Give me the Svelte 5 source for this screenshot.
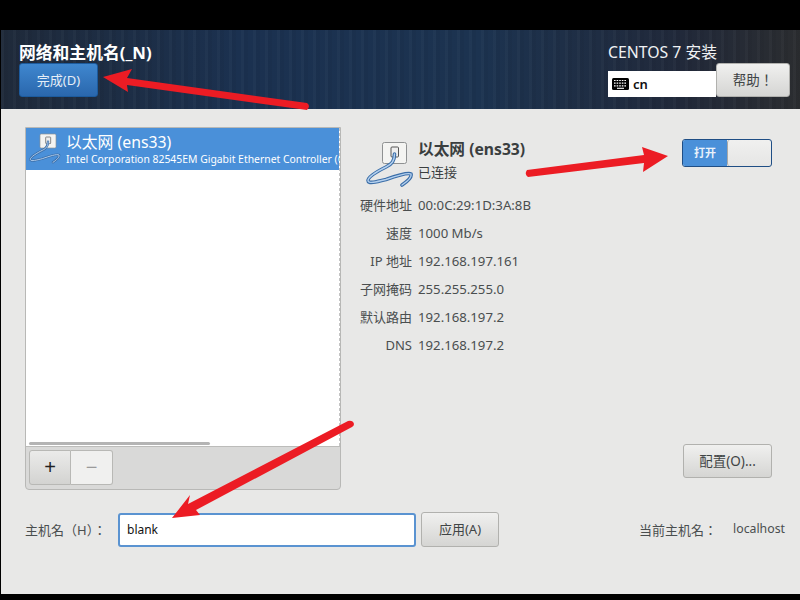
<script>
  const details = [
    ['硬件地址', '00:0C:29:1D:3A:8B'],
    ['速度', '1000 Mb/s'],
    ['IP 地址', '192.168.197.161'],
    ['子网掩码', '255.255.255.0'],
    ['默认路由', '192.168.197.2'],
    ['DNS', '192.168.197.2'],
  ];
  const cable = 'M28.5 13 C28.5 20 26 23 20 26 C12 30 2 36 2 39.5 C2 43 10 41 20 38.5 C30 35 42 31 45 33 C46 36 42 40 36 44';
</script>

{#snippet nicIcon(size)}
  <svg class="nic" width={size} height={size} viewBox="0 0 48 48" fill="none">
    <rect x="16.5" y="1.5" width="24" height="21" rx="2" fill="#f4f4f2" stroke="#8f9192" />
    <rect x="25" y="6" width="7.5" height="10" rx="1" fill="#eee" stroke="#555" />
    <path d={cable} stroke="#3b6ea8" stroke-width="3.6" stroke-linecap="round" />
    <path d={cable} stroke="#b4d0ee" stroke-width="1.4" stroke-linecap="round" />
  </svg>
{/snippet}

<div class="screen">
  <header class="topbar">
    <div class="spoke">
      <h1>网络和主机名(_N)</h1>
      <button class="btn done">完成(D)</button>
    </div>
    <div class="install">
      <div class="product">CENTOS 7 安装</div>
      <div class="install-row">
        <div class="layout">
          <svg width="17" height="12" viewBox="0 0 17 12">
            <rect width="17" height="12" rx="1.5" fill="#000" />
            <path d="M2 2.5h13M2 5.2h13M2 7.9h13" stroke="#fff" stroke-width="1.2" stroke-dasharray="1.6 1" />
            <path d="M5 10.3h7" stroke="#fff" stroke-width="1.1" />
          </svg>
          <span>cn</span>
        </div>
        <button class="btn help">帮助！</button>
      </div>
    </div>
  </header>

  <main class="content">
    <div class="columns">
      <section class="devices">
        <div class="list">
          <div class="device">
            {@render nicIcon(32)}
            <div class="device-text">
              <div class="device-name">以太网 (ens33)</div>
              <div class="device-desc">Intel Corporation 82545EM Gigabit Ethernet Controller (Copper)</div>
            </div>
          </div>
          <div class="scrollbar"></div>
        </div>
        <div class="toolbar">
          <div class="pair">
            <button class="tool add">+</button>
            <button class="tool remove">−</button>
          </div>
        </div>
      </section>

      <section class="detail">
        <div class="detail-head">
          <div class="detail-title">
            {@render nicIcon(48)}
            <div>
              <div class="detail-name">以太网 (ens33)</div>
              <div class="detail-state">已连接</div>
            </div>
          </div>
          <div class="switch">
            <span class="switch-on">打开</span>
            <span class="switch-knob"></span>
          </div>
        </div>
        <dl class="props">
          {#each details as [label, value]}
            <dt>{label}</dt>
            <dd>{value}</dd>
          {/each}
        </dl>
        <div class="config-row">
          <button class="btn config">配置(O)...</button>
        </div>
      </section>
    </div>

    <div class="hostname">
      <label for="host">主机名（H）：</label>
      <input id="host" value="blank" />
      <button class="btn apply">应用(A)</button>
      <div class="current">
        <span>当前主机名：</span>
        <span class="current-name">localhost</span>
      </div>
    </div>
  </main>

  <!-- red annotation arrows drawn over the screenshot -->
  <svg class="arrows" width="800" height="600" viewBox="0 0 800 600">
    <g fill="#ec1c24">
      <path d="M103 77 L132 69 L127 78 L307 103 Q311 106 307 110 L127 85 L128 92 Z" />
      <path d="M668 156 L642 147 L644 155 L527 170 Q524 174 528 177 L644 163 L643 172 Z" />
      <path d="M172 518 L190 495 L188 504 L348 421 Q353 420 354 424 Q354 426 352 427 L196 510 L200 515 Z" />
    </g>
  </svg>
</div>

<style>
  :global(body) {
    background: #000;
  }

  .screen {
    position: relative;
    width: 800px;
    height: 600px;
    box-sizing: border-box;
    padding: 30px 0 6px 1px;
    display: flex;
    flex-direction: column;
    background: #000;
    overflow: hidden;
    font-family: "Noto Sans", "Noto Sans CJK SC", sans-serif;
    font-size: 13px;
    color: #2e3436;
  }

  .topbar {
    height: 79px;
    flex: none;
    box-sizing: border-box;
    display: flex;
    justify-content: space-between;
    padding: 12px 10px 0 18px;
    background:
      repeating-linear-gradient(90deg, rgba(255, 255, 255, 0.025) 0 3px, rgba(0, 0, 0, 0.04) 3px 7px, rgba(255, 255, 255, 0) 7px 12px),
      linear-gradient(90deg, #1f2a3a 0%, #1b3150 30%, #1c3350 60%, #21293a 85%, #2b2d30 100%);
  }

  .spoke h1 {
    margin: 0;
    height: 21px;
    line-height: 21px;
    font-size: 16.8px;
    font-weight: 700;
    color: #fff;
    white-space: nowrap;
  }

  .btn {
    box-sizing: border-box;
    padding: 0 0 2px;
    font: inherit;
    font-size: 13px;
    color: #3f4445;
    border: 1px solid #b1b1ae;
    border-radius: 3px;
    background: linear-gradient(#f0f0ef, #d5d5d3);
  }

  .done {
    display: block;
    width: 79px;
    height: 34px;
    color: #e6eef7;
    border-color: #1c5b9e;
    background: linear-gradient(#3f87cf, #2a67ad);
  }

  .install {
    width: 182px;
  }

  .product {
    height: 21px;
    line-height: 21px;
    font-size: 15.8px;
    color: #f0f2f4;
    white-space: nowrap;
  }

  .install-row {
    display: flex;
    align-items: flex-end;
    height: 34px;
  }

  .layout {
    width: 108px;
    height: 26px;
    box-sizing: border-box;
    padding-left: 4px;
    display: flex;
    align-items: center;
    gap: 4px;
    background: #fff;
    color: #111;
    font-size: 13px;
    font-weight: 600;
  }

  .help {
    width: 74px;
    height: 34px;
    font-family: "Noto Sans", "Noto Sans CJK JP", sans-serif;
    font-size: 13.5px;
  }

  .content {
    flex: 1;
    display: flex;
    flex-direction: column;
    background: #e8e8e7;
    padding: 18px 0 0 24px;
  }

  .columns {
    display: flex;
    height: 363px;
  }

  .devices {
    width: 316px;
    flex: none;
    box-sizing: border-box;
    display: flex;
    flex-direction: column;
    border: 1px solid #b8b8b6;
    border-radius: 0 0 4px 4px;
    background: #d9d9d8;
  }

  .list {
    position: relative;
    flex: 1;
    background: #fff;
    border-right: 1px dashed #c4c4c4;
    overflow: hidden;
  }

  .device {
    height: 42px;
    display: flex;
    align-items: center;
    gap: 5px;
    padding-left: 3px;
    background: #4a90d9;
    color: #fff;
  }

  .nic {
    flex: none;
  }

  .device-text {
    white-space: nowrap;
  }

  .device-name {
    line-height: 20px;
    font-size: 15.8px;
  }

  .device-desc {
    line-height: 14px;
    font-size: 10.4px;
  }

  .scrollbar {
    position: absolute;
    left: 3px;
    bottom: 1px;
    width: 181px;
    height: 3px;
    border-radius: 2px;
    background: #b4b4b4;
  }

  .toolbar {
    height: 43px;
    flex: none;
    box-sizing: border-box;
    padding: 3px 0 0 3px;
    border-top: 1px solid #bcbcba;
  }

  .pair {
    display: flex;
    width: 84px;
    height: 35px;
  }

  .tool {
    box-sizing: border-box;
    height: 35px;
    padding: 0;
    font-family: "Liberation Sans", sans-serif;
    font-size: 20px;
    border: 1px solid #b8b8b5;
  }

  .add {
    width: 42px;
    color: #222;
    border-radius: 3px 0 0 3px;
    background: linear-gradient(#ebebea, #d3d3d1);
  }

  .remove {
    width: 42px;
    border-left: none;
    color: #9a9a9a;
    border-radius: 0 3px 3px 0;
    background: #f0f0ef;
  }

  .detail {
    flex: 1;
    display: flex;
    flex-direction: column;
    padding-left: 19px;
  }

  .detail-head {
    display: flex;
    justify-content: space-between;
    padding: 11px 28px 0 6px;
    height: 64px;
    box-sizing: border-box;
  }

  .detail-title {
    display: flex;
    gap: 4px;
  }

  .detail-title .nic {
    margin-top: 3px;
  }

  .detail-name {
    line-height: 22px;
    font-size: 15.7px;
    font-weight: 700;
    color: #3a3e3f;
  }

  .detail-state {
    line-height: 24px;
    font-size: 13px;
    color: #3a3e3f;
  }

  .switch {
    width: 90px;
    height: 28px;
    margin-top: 1px;
    box-sizing: border-box;
    display: flex;
    border: 1px solid #1f4e85;
    border-radius: 3px;
    overflow: hidden;
    background: linear-gradient(#f0f0ef, #e6e6e5);
  }

  .switch-on {
    width: 44px;
    line-height: 26px;
    text-align: center;
    font-size: 11px;
    font-weight: 700;
    color: #eaf2fb;
    background: #4a90d9;
  }

  .switch-knob {
    flex: 1;
    border-left: 1px solid #a8a8a6;
    border-radius: 3px 0 0 3px;
  }

  .props {
    margin: 0;
    display: grid;
    grid-template-columns: 52px 1fr;
    grid-auto-rows: 28px;
    column-gap: 6px;
    align-items: center;
    line-height: 28px;
  }

  .props dt {
    justify-self: end;
    white-space: nowrap;
    color: #4a4e4f;
  }

  .props dd {
    margin: 0;
    font-size: 13.2px;
    color: #4a4e4f;
  }

  .config-row {
    margin-top: auto;
    display: flex;
    justify-content: flex-end;
    padding: 0 28px 12px 0;
  }

  .config {
    width: 89px;
    height: 34px;
    font-size: 13.5px;
  }

  .hostname {
    display: flex;
    align-items: center;
    height: 35px;
    margin-top: 22px;
    padding-right: 15px;
    color: #4a4e4f;
    font-family: "Noto Sans", "Noto Sans CJK JP", sans-serif;
  }

  .hostname label {
    width: 93px;
    flex: none;
    white-space: nowrap;
  }

  #host {
    width: 298px;
    height: 34px;
    box-sizing: border-box;
    padding: 0 7px;
    font: inherit;
    font-size: 12px;
    color: #111;
    border: 2px solid #5a93d1;
    border-radius: 3px;
    background: #fff;
    outline: none;
  }

  .apply {
    width: 78px;
    height: 35px;
    margin-left: 5px;
  }

  .current {
    margin-left: auto;
    display: flex;
    gap: 16px;
  }

  .current-name {
    font-size: 12.3px;
    line-height: 18px;
  }

  .arrows {
    position: absolute;
    left: 0;
    top: 0;
    pointer-events: none;
  }
</style>
